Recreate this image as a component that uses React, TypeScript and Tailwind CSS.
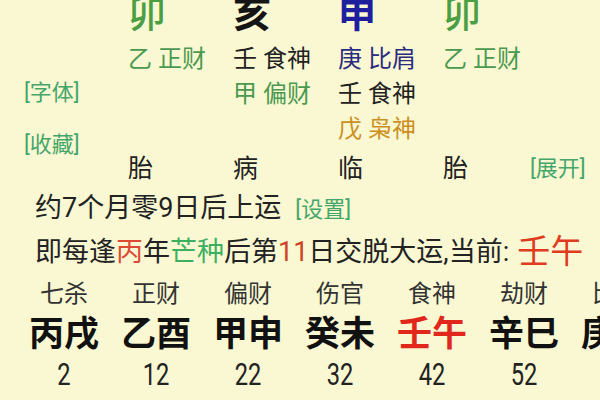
const GREEN = "text-[#4a9950]";
const BLACK = "text-[#222222]";
const NAVY = "text-[#2b2b80]";
const ORANGE = "text-[#cc8f1f]";
const LINK = "text-[#45a66a]";

interface Pillar {
  zhi: string;
  zhiCls: string;
  hidden: { text: string; cls: string }[];
  dishi: string;
}

const pillars: Pillar[] = [
  { zhi: "卯", zhiCls: "text-[#4c9e44] font-medium", hidden: [{ text: "乙 正财", cls: GREEN }], dishi: "胎" },
  {
    zhi: "亥",
    zhiCls: "text-[#151515] font-bold",
    hidden: [
      { text: "壬 食神", cls: BLACK },
      { text: "甲 偏财", cls: GREEN },
    ],
    dishi: "病",
  },
  {
    zhi: "申",
    zhiCls: "text-[#1f1f9e] font-bold",
    hidden: [
      { text: "庚 比肩", cls: NAVY },
      { text: "壬 食神", cls: BLACK },
      { text: "戊 枭神", cls: ORANGE },
    ],
    dishi: "临",
  },
  { zhi: "卯", zhiCls: "text-[#4c9e44] font-medium", hidden: [{ text: "乙 正财", cls: GREEN }], dishi: "胎" },
];

// 大运：十神 / 干支 / 起运岁数
const dayun = [
  { god: "七杀", gz: "丙戌", age: "2" },
  { god: "正财", gz: "乙酉", age: "12" },
  { god: "偏财", gz: "甲申", age: "22" },
  { god: "伤官", gz: "癸未", age: "32" },
  { god: "食神", gz: "壬午", age: "42", current: true },
  { god: "劫财", gz: "辛巳", age: "52" },
  { god: "比肩", gz: "庚辰", age: "62" },
];

export default function App() {
  return (
    <div className="h-[400px] w-[600px] overflow-hidden bg-[#f9f8d2] font-['Roboto','Noto_Sans_CJK_SC',sans-serif] text-[#222222]">
      {/* 四柱地支 + 藏干 + 长生 */}
      <div className="mt-[-4px] flex">
        <div className="flex w-[128px] shrink-0 flex-col pl-[24px] text-[22px] leading-[26px]">
          <div className={`mt-[84px] ${LINK}`}>[字体]</div>
          <div className={`mt-[26px] ${LINK}`}>[收藏]</div>
        </div>
        <div className="flex flex-col">
          <div className="flex">
            {pillars.map((p, i) => (
              <div key={i} className="flex w-[105px] shrink-0 flex-col">
                <div className={`h-[37px] text-[38px] leading-[37px] ${p.zhiCls}`}>{p.zhi}</div>
                <div className="mt-[9px] flex flex-col">
                  {p.hidden.map((h, j) => (
                    <div key={j} className={`h-[35px] whitespace-pre text-[24px] leading-[35px] ${h.cls}`}>
                      {h.text}
                    </div>
                  ))}
                </div>
              </div>
            ))}
          </div>
          <div className="mt-[7px] flex h-[30px] items-center text-[25px] leading-[30px]">
            <div className="w-[105px] shrink-0">{pillars[0].dishi}</div>
            <div className="w-[105px] shrink-0">{pillars[1].dishi}</div>
            <div className="w-[105px] shrink-0">{pillars[2].dishi}</div>
            <div className="w-[87px] shrink-0">{pillars[3].dishi}</div>
            <div className={`text-[22px] ${LINK}`}>[展开]</div>
          </div>
        </div>
      </div>

      {/* 起运信息 */}
      <div className="mt-[6px] flex h-[36px] items-center pl-[35px] text-[27px] leading-[36px]">
        <span>约7个月零9日后上运</span>
        <span className={`ml-[14px] mt-[4px] text-[22px] ${LINK}`}>[设置]</span>
      </div>
      <div className="mt-[8px] flex h-[36px] items-center whitespace-nowrap pl-[35px] text-[27px] leading-[36px]">
        <span>即每逢</span>
        <span className="text-[#dd4a33]">丙</span>
        <span>年</span>
        <span className="text-[#3cb060]">芒种</span>
        <span>后第</span>
        <span className="text-[#cc4422]">11</span>
        <span>日交脱大运,当前:</span>
        <span className="ml-[8px] text-[33px] text-[#e03b1f]">壬午</span>
      </div>

      {/* 大运 */}
      <div className="ml-[18px] mt-[10px] flex">
        {dayun.map((d) => (
          <div key={d.gz} className="flex w-[92px] shrink-0 flex-col items-center">
            <div className="h-[28px] whitespace-nowrap text-[24px] leading-[28px] text-[#333333]">{d.god}</div>
            <div
              className={`mt-[7px] h-[40px] whitespace-nowrap text-[35px] font-bold leading-[40px] ${
                d.current ? "text-[#e1261c]" : "text-[#111111]"
              }`}
            >
              {d.gz}
            </div>
            <div className="mt-[3px] h-[32px] scale-x-[0.74] text-[32px] leading-[32px] text-[#222222]">
              {d.age}
            </div>
          </div>
        ))}
      </div>
    </div>
  );
}
